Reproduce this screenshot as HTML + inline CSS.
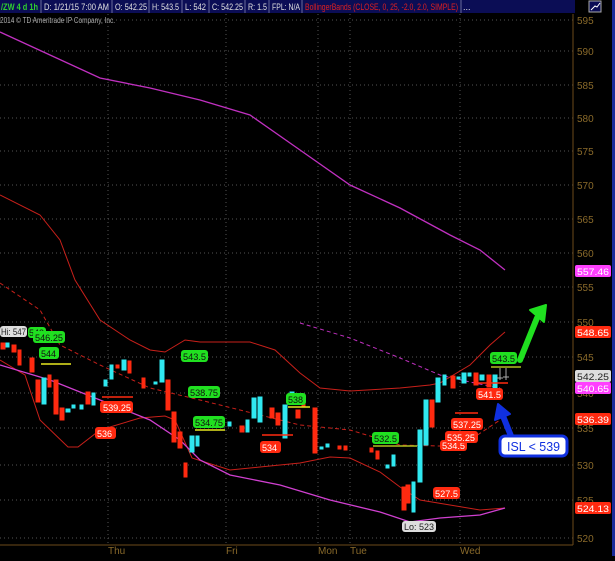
<!DOCTYPE html><html><head><style>
body{margin:0;background:#000;width:615px;height:556px;overflow:hidden;font-family:"Liberation Sans",sans-serif}
</style></head><body>
<svg width="615" height="556" xmlns="http://www.w3.org/2000/svg" font-family="Liberation Sans, sans-serif">
<rect width="615" height="556" fill="#000"/>
<rect x="0" y="0" width="575" height="13" fill="#0b0d55"/>
<g stroke="#6a6a9a" stroke-width="1">
<line x1="41" y1="0" x2="41" y2="13"/><line x1="112" y1="0" x2="112" y2="13"/><line x1="149" y1="0" x2="149" y2="13"/><line x1="182" y1="0" x2="182" y2="13"/><line x1="209" y1="0" x2="209" y2="13"/><line x1="245" y1="0" x2="245" y2="13"/><line x1="269" y1="0" x2="269" y2="13"/><line x1="302" y1="0" x2="302" y2="13"/><line x1="461" y1="0" x2="461" y2="13"/></g>
<g font-size="9" fill="#e0e0e0" lengthAdjust="spacingAndGlyphs">
<text x="1" y="10" fill="#2fd02f" font-weight="bold" textLength="37" lengthAdjust="spacingAndGlyphs">/ZW 4 d 1h</text>
<text x="44" y="10" textLength="65" lengthAdjust="spacingAndGlyphs">D: 1/21/15 7:00 AM</text>
<text x="115" y="10" textLength="32" lengthAdjust="spacingAndGlyphs">O: 542.25</text>
<text x="152" y="10" textLength="27" lengthAdjust="spacingAndGlyphs">H: 543.5</text>
<text x="185" y="10" textLength="21" lengthAdjust="spacingAndGlyphs">L: 542</text>
<text x="212" y="10" textLength="31" lengthAdjust="spacingAndGlyphs">C: 542.25</text>
<text x="248" y="10" textLength="19" lengthAdjust="spacingAndGlyphs">R: 1.5</text>
<text x="272" y="10" textLength="28" lengthAdjust="spacingAndGlyphs">FPL: N/A</text>
<text x="305" y="10" fill="#e02020" textLength="153" lengthAdjust="spacingAndGlyphs">BollingerBands (CLOSE, 0, 25, -2.0, 2.0, SIMPLE)</text>
<text x="463" y="10">...</text>
</g>
<rect x="589" y="1" width="12" height="11" fill="#0b0d55" stroke="#aaa"/>
<path d="M591 10 L595 6 L597 7 L600 3" stroke="#fff" fill="none"/>
<rect x="612" y="0" width="3" height="556" fill="#1a2a9a"/>
<text x="0" y="23" font-size="8" fill="#b0b0b0" textLength="115" lengthAdjust="spacingAndGlyphs">2014 © TD Ameritrade IP Company, Inc.</text>
<g stroke="#555" stroke-dasharray="1,3" stroke-width="1">
<line x1="0" y1="20" x2="573" y2="20"/><line x1="0" y1="51" x2="573" y2="51"/><line x1="0" y1="85" x2="573" y2="85"/><line x1="0" y1="118" x2="573" y2="118"/><line x1="0" y1="151" x2="573" y2="151"/><line x1="0" y1="185" x2="573" y2="185"/><line x1="0" y1="219" x2="573" y2="219"/><line x1="0" y1="253" x2="573" y2="253"/><line x1="0" y1="287" x2="573" y2="287"/><line x1="0" y1="322" x2="573" y2="322"/><line x1="0" y1="357" x2="573" y2="357"/><line x1="0" y1="393" x2="573" y2="393"/><line x1="0" y1="428" x2="573" y2="428"/><line x1="0" y1="465" x2="573" y2="465"/><line x1="0" y1="500" x2="573" y2="500"/><line x1="0" y1="538" x2="573" y2="538"/>
<line x1="108" y1="14" x2="108" y2="545"/><line x1="226" y1="14" x2="226" y2="545"/><line x1="318" y1="14" x2="318" y2="545"/><line x1="350" y1="14" x2="350" y2="545"/><line x1="460" y1="14" x2="460" y2="545"/>
</g>
<line x1="573" y1="14" x2="573" y2="545" stroke="#6b4a1a"/>
<line x1="0" y1="545" x2="573" y2="545" stroke="#6b4a1a"/>
<g font-size="10" fill="#8a6a2a">
<text x="577" y="24">595</text><text x="577" y="55">590</text><text x="577" y="89">585</text><text x="577" y="122">580</text><text x="577" y="155">575</text><text x="577" y="189">570</text><text x="577" y="223">565</text><text x="577" y="257">560</text><text x="577" y="291">555</text><text x="577" y="326">550</text><text x="577" y="361">545</text><text x="577" y="397">540</text><text x="577" y="432">535</text><text x="577" y="469">530</text><text x="577" y="504">525</text><text x="577" y="542">520</text>
<text x="108" y="554">Thu</text><text x="226" y="554">Fri</text><text x="318" y="554">Mon</text><text x="350" y="554">Tue</text><text x="460" y="554">Wed</text>
</g>
<polyline fill="none" stroke="#c030c0" stroke-width="1.3" points="0,32 50,55 100,78 150,88 200,100 250,115 300,150 350,185 400,208 450,235 480,250 505,270"/>
<polyline fill="none" stroke="#c8201a" stroke-width="1" points="0,195 40,215 60,240 75,280 100,320 130,340 150,350 165,352 185,340 200,342 250,342 275,350 300,373 320,388 350,391 400,388 430,385 440,383 470,365 490,345 505,332"/>
<polyline fill="none" stroke="#c8201a" stroke-width="1" points="0,360 25,375 40,420 68,447 78,447 100,430 140,418 165,416 175,420 192,458 230,470 260,467 300,463 330,457 350,458 380,472 400,487 420,500 450,505 480,510 505,508"/>
<polyline fill="none" stroke="#d040d0" stroke-width="1.3" points="0,365 50,380 100,400 150,420 180,440 200,460 230,475 280,485 330,500 380,512 410,522 440,518 480,515 505,508"/>
<polyline fill="none" stroke="#c8201a" stroke-dasharray="4,3" points="0,283 40,310 60,345 100,365 150,388 200,400 260,415 300,425 350,430 400,445 440,446 470,440 500,420"/>
<polyline fill="none" stroke="#c030c0" stroke-dasharray="4,3" points="300,323 350,338 400,358 440,375 470,382 500,388"/>
<g stroke-width="1">
<g fill="#ff2a10" stroke="#ff2a10">
<rect x="1" y="343" width="4" height="6"/><rect x="12" y="345" width="4" height="7"/>
<rect x="18" y="350" width="3" height="15"/><rect x="30" y="358" width="4" height="14"/>
<rect x="36" y="380" width="4" height="22"/><rect x="48" y="375" width="3" height="12"/>
<rect x="54" y="380" width="4" height="34"/><rect x="60" y="408" width="4" height="12"/>
<rect x="86" y="392" width="4" height="12"/><rect x="116" y="365" width="3" height="3"/>
<rect x="128" y="361" width="3" height="12"/><rect x="142" y="378" width="3" height="10"/>
<rect x="166" y="380" width="4" height="30"/><rect x="172" y="412" width="4" height="30"/>
<rect x="178" y="432" width="4" height="16"/><rect x="184" y="463" width="3" height="14"/>
<rect x="240" y="426" width="4" height="6"/><rect x="270" y="408" width="4" height="10"/>
<rect x="276" y="413" width="4" height="12"/><rect x="296" y="410" width="4" height="8"/>
<rect x="302" y="402" width="3" height="5"/><rect x="313" y="408" width="4" height="45"/>
<rect x="338" y="446" width="3" height="3"/><rect x="344" y="446" width="3" height="4"/>
<rect x="370" y="448" width="3" height="4"/><rect x="376" y="451" width="3" height="8"/>
<rect x="402" y="487" width="4" height="23"/><rect x="406" y="485" width="4" height="18"/>
<rect x="430" y="400" width="4" height="27"/><rect x="451" y="376" width="4" height="12"/>
<rect x="474" y="373" width="4" height="12"/><rect x="487" y="375" width="4" height="12"/>
</g>
<g fill="#30e8f0" stroke="#30e8f0">
<rect x="6" y="343" width="3" height="4"/><rect x="42" y="378" width="4" height="26"/>
<rect x="66" y="409" width="4" height="3"/><rect x="72" y="405" width="3" height="3"/>
<rect x="80" y="405" width="3" height="4"/><rect x="92" y="393" width="3" height="12"/>
<rect x="104" y="380" width="3" height="6"/><rect x="110" y="365" width="3" height="14"/>
<rect x="122" y="360" width="4" height="10"/><rect x="154" y="382" width="3" height="2"/>
<rect x="160" y="360" width="4" height="22"/><rect x="190" y="436" width="4" height="16"/>
<rect x="196" y="436" width="3" height="10"/><rect x="228" y="422" width="3" height="4"/>
<rect x="246" y="420" width="3" height="12"/><rect x="252" y="398" width="4" height="20"/>
<rect x="258" y="397" width="4" height="25"/><rect x="283" y="405" width="4" height="33"/>
<rect x="290" y="392" width="4" height="12"/><rect x="320" y="447" width="3" height="2"/>
<rect x="326" y="444" width="3" height="3"/><rect x="386" y="465" width="3" height="3"/>
<rect x="392" y="455" width="3" height="11"/><rect x="412" y="482" width="3" height="30"/>
<rect x="418" y="430" width="4" height="52"/><rect x="424" y="400" width="4" height="45"/>
<rect x="436" y="378" width="4" height="24"/><rect x="443" y="375" width="3" height="10"/>
<rect x="457" y="377" width="3" height="2"/><rect x="462" y="373" width="4" height="10"/>
<rect x="468" y="373" width="3" height="3"/><rect x="480" y="375" width="4" height="5"/>
<rect x="493" y="375" width="4" height="23"/>
</g>
<g stroke="#aaa"><line x1="500" y1="368" x2="500" y2="380"/><line x1="497" y1="378" x2="503" y2="378"/><line x1="506" y1="368" x2="506" y2="380"/><line x1="503" y1="377" x2="509" y2="377"/></g>
</g>
<g stroke-width="1.5">
<line x1="41" y1="364" x2="71" y2="364" stroke="#e8e820"/>
<line x1="195" y1="430" x2="225" y2="430" stroke="#e8e820"/>
<line x1="288" y1="407" x2="310" y2="407" stroke="#e8e820"/>
<line x1="373" y1="446" x2="417" y2="446" stroke="#b0c020"/>
<line x1="491" y1="367" x2="521" y2="367" stroke="#b0c020"/>
<line x1="102" y1="397" x2="133" y2="397" stroke="#ff2a10"/>
<line x1="262" y1="435" x2="293" y2="435" stroke="#ff2a10"/>
<line x1="455" y1="413" x2="478" y2="413" stroke="#ff2a10"/>
<line x1="478" y1="383" x2="508" y2="383" stroke="#ff2a10"/>
</g>
<g font-size="9">
<rect x="0" y="326" width="27" height="11" rx="3" fill="#ddd"/><text x="1" y="335" fill="#222" textLength="25" lengthAdjust="spacingAndGlyphs">Hi: 547</text>
<rect x="28" y="327" width="18" height="11" rx="3" fill="#20e020"/><text x="29" y="336" fill="#111">543</text>
<rect x="33" y="331" width="32" height="12" rx="3" fill="#20e020"/><text x="35" y="341" fill="#111" textLength="28" lengthAdjust="spacingAndGlyphs">546.25</text>
<rect x="39" y="347" width="20" height="12" rx="3" fill="#20e020"/><text x="41" y="357" fill="#111">544</text>
<rect x="181" y="350" width="27" height="12" rx="3" fill="#20e020"/><text x="183" y="360" fill="#111" textLength="23" lengthAdjust="spacingAndGlyphs">543.5</text>
<rect x="188" y="386" width="32" height="12" rx="3" fill="#20e020"/><text x="190" y="396" fill="#111" textLength="28" lengthAdjust="spacingAndGlyphs">538.75</text>
<rect x="193" y="416" width="32" height="12" rx="3" fill="#20e020"/><text x="195" y="426" fill="#111" textLength="28" lengthAdjust="spacingAndGlyphs">534.75</text>
<rect x="286" y="393" width="20" height="12" rx="3" fill="#20e020"/><text x="288" y="403" fill="#111">538</text>
<rect x="372" y="432" width="27" height="12" rx="3" fill="#20e020"/><text x="374" y="442" fill="#111" textLength="23" lengthAdjust="spacingAndGlyphs">532.5</text>
<rect x="490" y="352" width="27" height="12" rx="3" fill="#20e020"/><text x="492" y="362" fill="#111" textLength="23" lengthAdjust="spacingAndGlyphs">543.5</text>
<rect x="100" y="401" width="33" height="12" rx="3" fill="#ff2a10"/><text x="103" y="411" fill="#fff" textLength="28" lengthAdjust="spacingAndGlyphs">539.25</text>
<rect x="95" y="427" width="21" height="12" rx="3" fill="#ff2a10"/><text x="97" y="437" fill="#fff">536</text>
<rect x="260" y="441" width="21" height="12" rx="3" fill="#ff2a10"/><text x="262" y="451" fill="#fff">534</text>
<rect x="440" y="440" width="27" height="11" rx="3" fill="#ff2a10"/><text x="442" y="449" fill="#fff" textLength="23" lengthAdjust="spacingAndGlyphs">534.5</text>
<rect x="445" y="431" width="33" height="12" rx="3" fill="#ff2a10"/><text x="447" y="441" fill="#fff" textLength="28" lengthAdjust="spacingAndGlyphs">535.25</text>
<rect x="451" y="418" width="32" height="12" rx="3" fill="#ff2a10"/><text x="453" y="428" fill="#fff" textLength="28" lengthAdjust="spacingAndGlyphs">537.25</text>
<rect x="433" y="487" width="27" height="12" rx="3" fill="#ff2a10"/><text x="435" y="497" fill="#fff" textLength="23" lengthAdjust="spacingAndGlyphs">527.5</text>
<rect x="476" y="388" width="27" height="12" rx="3" fill="#ff2a10"/><text x="478" y="398" fill="#fff" textLength="23" lengthAdjust="spacingAndGlyphs">541.5</text>
<rect x="402" y="521" width="34" height="11" rx="3" fill="#ddd"/><text x="404" y="530" fill="#222" textLength="30" lengthAdjust="spacingAndGlyphs">Lo: 523</text>
<rect x="575" y="265" width="36" height="12" rx="2" fill="#ff40ff"/><text x="577" y="275" fill="#fff" textLength="32" lengthAdjust="spacingAndGlyphs">557.46</text>
<rect x="575" y="326" width="36" height="12" rx="2" fill="#ff2a10"/><text x="577" y="336" fill="#fff" textLength="32" lengthAdjust="spacingAndGlyphs">548.65</text>
<rect x="575" y="370" width="36" height="12" rx="2" fill="#ddd"/><text x="577" y="380" fill="#222" textLength="32" lengthAdjust="spacingAndGlyphs">542.25</text>
<rect x="575" y="382" width="36" height="12" rx="2" fill="#ff40ff"/><text x="577" y="392" fill="#fff" textLength="32" lengthAdjust="spacingAndGlyphs">540.65</text>
<rect x="575" y="413" width="36" height="12" rx="2" fill="#ff2a10"/><text x="577" y="423" fill="#fff" textLength="32" lengthAdjust="spacingAndGlyphs">536.39</text>
<rect x="575" y="502" width="36" height="12" rx="2" fill="#ff2a10"/><text x="577" y="512" fill="#fff" textLength="32" lengthAdjust="spacingAndGlyphs">524.13</text>
</g>
<path d="M520 360 L537 318" stroke="#20e020" stroke-width="6" stroke-linecap="round" fill="none"/>
<path d="M530 310 L546 305 L544 322 Z" fill="#20e020" stroke="#20e020" stroke-width="2" stroke-linejoin="round"/>
<path d="M511 436 L503 416" stroke="#1030e0" stroke-width="6" stroke-linecap="round" fill="none"/>
<path d="M495 420 L498 404 L510 414 Z" fill="#1030e0" stroke="#1030e0" stroke-width="2" stroke-linejoin="round"/>
<rect x="500" y="436" width="67" height="20" rx="5" fill="#fff" stroke="#1030e0" stroke-width="3"/>
<text x="507" y="451" font-size="13" fill="#1030e0" textLength="53" lengthAdjust="spacingAndGlyphs">ISL &lt; 539</text>
</svg>
</body></html>
